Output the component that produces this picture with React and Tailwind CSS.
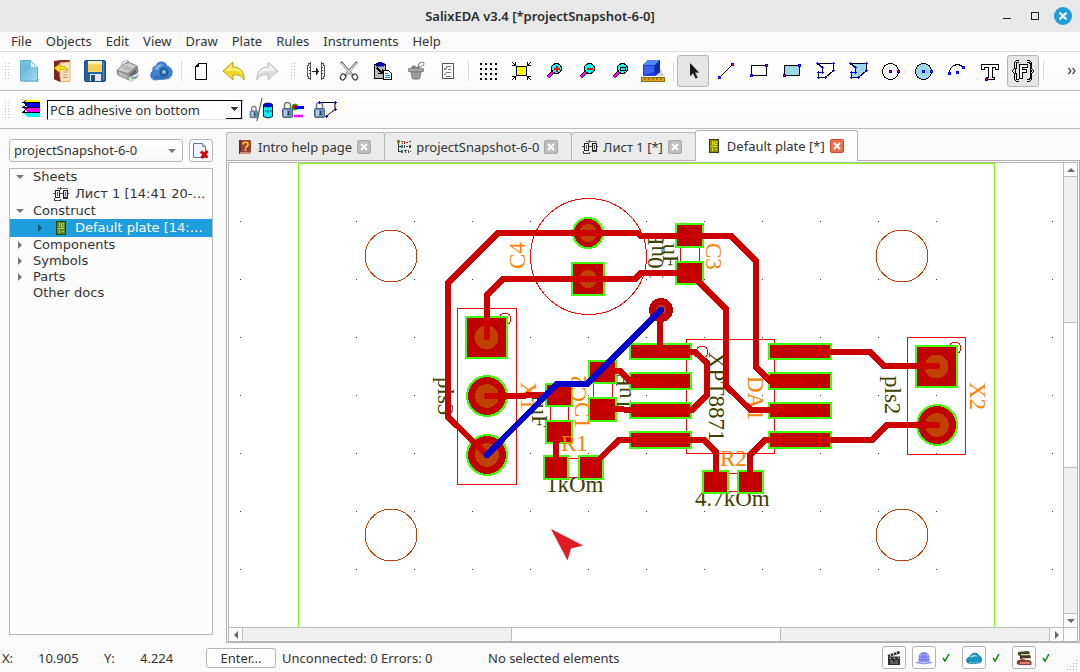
import { clsx } from "clsx";

const menus = ["File", "Objects", "Edit", "View", "Draw", "Plate", "Rules", "Instruments", "Help"];

/* ---------- toolbar icons, all on a 24x24 grid ---------- */

function Icon({ children, smooth = false, size = "h-6 w-6", box = "0 0 24 24" }) {
    return (
        <svg
            viewBox={box}
            className={clsx("shrink-0", size)}
            shapeRendering={smooth ? "auto" : "crispEdges"}
            fill="none"
            aria-hidden="true"
        >
            {children}
        </svg>
    );
}

const Node = ({ x, y }) => (
    <g>
        <rect x={x - 1} y={y - 1} width="3" height="3" fill="#0000ff" />
        <rect x={x} y={y} width="1" height="1" fill="#ff0000" />
    </g>
);

const Nodes = ({ points }) => points.map(([x, y]) => (
    <path key={`${x}-${y}`} d={`M${x - 1} ${y + 0.5}h3M${x + 0.5} ${y - 1}v3`} stroke="#0000ff" />
));

const NewIcon = () => (
    <Icon smooth>
        <defs>
            <linearGradient id="newDoc" x1="0" y1="0" x2="1" y2="1">
                <stop offset="0" stopColor="#8fcbe6" />
                <stop offset=".5" stopColor="#7cc3e2" />
                <stop offset="1" stopColor="#a9dcf0" />
            </linearGradient>
        </defs>
        <path d="M5 20h18l-2 3H6z" fill="#b8b8b8" opacity=".7" />
        <path d="M3.500 1.500h10l7 7v13.500h-17z" fill="url(#newDoc)" stroke="#5aa9cc" />
        <path d="M13.500 1.500v7h7z" fill="#d8f0fa" stroke="#6db4d3" strokeWidth=".7" />
        <path d="M4.500 2.500h8v7l-8 8z" fill="#4ba6cf" opacity=".35" />
    </Icon>
);

const OpenIcon = () => (
    <Icon smooth>
        <path d="M4 2l6-1h10v21l-9 1-7-3z" fill="#8c2f26" />
        <path d="M4 2l6 2v19l-6-3z" fill="#7a241e" />
        <path d="M10 4l10-1v19l-9 1-1-6z" fill="#f9e6c8" stroke="#eab27c" />
        <path d="M13 16h5M13 18.500h5M13 13h4" stroke="#e0904e" />
        <path d="M4 9l6-4v2.500c5-1 7 1 8 4.500-2-1.500-4-2-8-1.500V14z" fill="#ffe11a" stroke="#c79500" strokeWidth=".7" />
    </Icon>
);

const SaveIcon = () => (
    <Icon smooth>
        <rect x="1.500" y="1.500" width="21" height="21" rx="1.500" fill="#2563a5" stroke="#1b4d84" />
        <rect x="5" y="2" width="14" height="11" fill="#ffd75e" />
        <path d="M5 2h14v3H5z" fill="#fff0b0" />
        <path d="M5 8h14M5 10.500h14" stroke="#f1c348" />
        <rect x="7" y="15" width="11" height="7" fill="#e4e8ee" />
        <rect x="8" y="16" width="4" height="6" fill="#2a4d78" />
        <path d="M20 3h1v18h-1z" fill="#4a8dcd" />
    </Icon>
);

const PrintIcon = () => (
    <Icon smooth>
        <path d="M5 7l1-4 6-2 1 6z" fill="#dcebfa" stroke="#8ba6bd" strokeWidth=".7" />
        <path d="M1 11l6-5 5-3 9 4 1 6-9 8-11-5z" fill="#8b8b8b" stroke="#6b6b6b" strokeWidth=".8" />
        <path d="M1 11l8-6 4-1 7 3-8 7z" fill="#cdcdcd" />
        <path d="M9 7l7 3M7 8.500l7 3" stroke="#9c9c9c" />
        <path d="M2.500 12.500l9 3.500v4l-9-4z" fill="#b8b8b8" />
        <path d="M14 15l6-5v5l-6 5z" fill="#666" />
        <path d="M12 19l8-4 3 2-8 6z" fill="#eef6ff" stroke="#8a9db0" strokeWidth=".6" />
        <path d="M15 20l3-2" stroke="#5cc62e" strokeWidth="2" />
        <path d="M18 19.500l3-2" stroke="#7a4fd0" strokeWidth="1.500" />
    </Icon>
);

const CloudIcon = () => (
    <Icon smooth>
        <path d="M5 21a5 5 0 0 1-1-9C3 9 5 7 7 7c1-5 9-6 11 0 4 1 6 5 5 8-1 4-4 5-6 5z" fill="#3f82d0" stroke="#2a67b2" strokeWidth=".7" />
        <path d="M6 11c0-4 5-7 9-5-3 0-5 2-6 5z" fill="#7db2ea" />
        <path d="M4 18c5-3 12 2 17-3-2 5-12 6-17 3z" fill="#2d6cbb" />
        <circle cx="15" cy="13" r="3.500" stroke="#27568f" strokeWidth="1.600" />
        <path d="M15 8v10M10 13h10M11.500 9.500l7 7M18.500 9.500l-7 7" stroke="#27568f" strokeWidth="1.100" />
        <circle cx="15" cy="13" r="2" fill="#8fbcec" />
    </Icon>
);

const SheetIcon = () => (
    <Icon>
        <path d="M9.500 4.500h8v16h-11v-13z" fill="#fff" stroke="#000" />
        <path d="M9.500 4.500v3h-3" fill="#138080" stroke="#000" />
        <rect x="8" y="6" width="1" height="1" fill="#138080" />
    </Icon>
);

const UndoIcon = () => (
    <Icon smooth>
        <path d="M1 12l10-9v5c8 0 12 6 11 13-2-4-6-6-11-5v5z" fill="#f6da22" stroke="#a98c00" strokeWidth=".8" />
        <path d="M3 12l7-6.500V9c6 0 9 2 11 7-3-3-6-5-11-4z" fill="#fff27a" />
    </Icon>
);

const RedoIcon = () => (
    <Icon smooth>
        <path d="M23 12L13 3v5C5 8 1 14 2 21c2-4 6-6 11-5v5z" fill="#dcdcdc" stroke="#b5b5b5" strokeWidth=".8" />
        <path d="M21 12l-7-6.500V9c-6 0-9 2-11 7 3-3 6-5 11-4z" fill="#f4f4f4" />
    </Icon>
);

const MirrorIcon = () => (
    <Icon>
        <path d="M6.500 3v18M17.500 3v18" stroke="#444" />
        <path d="M6 4.500H4.500v2h-1v11h1v2H6M18 4.500h1.500v2h1v11h-1v2H18" stroke="#555" />
        <path d="M5 8.500h1M5 11.500h1M5 14.500h1M18 8.500h1M18 11.500h1M18 14.500h1" stroke="#555" />
        <path d="M8 12.500h7M13.500 10v5M12.500 9v7" stroke="#222" />
    </Icon>
);

const CutIcon = () => (
    <Icon smooth>
        <path d="M4 3l12 14M20 3L8 17" stroke="#4a4a4a" strokeWidth="2.500" />
        <path d="M4.500 4l11 12.500M19.500 4l-11 12.500" stroke="#e6e6e6" strokeWidth="1.200" />
        <ellipse cx="6" cy="18" rx="2.500" ry="3" stroke="#4d4d4d" strokeWidth="1.300" transform="rotate(30 6 18)" />
        <ellipse cx="18" cy="18" rx="2.500" ry="3" stroke="#4d4d4d" strokeWidth="1.300" transform="rotate(-30 18 18)" />
    </Icon>
);

const PasteIcon = () => (
    <Icon>
        <path d="M4.500 5.500h11v14h-11z" fill="#b9b9b9" stroke="#000" />
        <path d="M6 4h2V3h4v1h2v3H6z" fill="#0000c0" stroke="#00006a" strokeWidth=".5" />
        <path d="M7 9l5 5M12.500 10v4.500H8" stroke="#000" strokeWidth="1.500" />
        <path d="M13.500 11.500h5l3 3v6h-8z" fill="#fff" stroke="#000" />
        <path d="M15 14.500h3M15 16.500h5M15 18.500h5" stroke="#00a0c8" />
    </Icon>
);

const BasketIcon = () => (
    <Icon smooth>
        <path d="M7 12h12l-2 8q-4 1.500-8 0z" fill="#8a8a8a" />
        <path d="M5.500 9.500h15v3h-15z" fill="#a8a8a8" stroke="#7c7c7c" strokeWidth=".8" />
        <path d="M8 9c1-3 4-3 5-1l3-1 1 2" fill="#7c7c7c" />
        <path d="M10 14l1 5M13 14v5M16 14l-1 5" stroke="#b4b4b4" />
        <ellipse cx="18" cy="5.500" rx="3" ry="1.800" stroke="#888" transform="rotate(-25 18 5)" />
    </Icon>
);

const ListIcon = () => (
    <Icon>
        <path d="M6.500 4.500h11v15h-11z" fill="#fff" stroke="#555" />
        <path d="M10 7.500h5M10 13.500h5M10 17.500h5M12 10.500h3" stroke="#777" />
        <path d="M8 9l1 2 2-3M8 15l1 1 1-2" stroke="#888" />
    </Icon>
);

const GridIcon = () => (
    <Icon>
        {[4, 9, 14, 19].map((y) => [4, 9, 14, 19].map((x) => (
            <rect key={`${x}-${y}`} x={x} y={y} width="2" height="2" fill="#000" />
        )))}
    </Icon>
);

const FitIcon = () => (
    <Icon>
        <rect x="7.500" y="7.500" width="10" height="9" fill="#ffff00" stroke="#000" />
        <path d="M3 3l3 3M22 3l-3 3M3 21l3-3M22 21l-3-3" stroke="#000" />
        <path d="M3 6.500h3.500V3M22 6.500h-3.500V3M3 17.500h3.500V21M22 17.500h-3.500V21" stroke="#000" />
    </Icon>
);

function ZoomIcon({ kind }) {
    return (
        <Icon>
            <path d="M5.500 18.500l5-5" stroke="#000" strokeWidth="4" />
            <path d="M5.500 18.500l5-5" stroke="#ff00ff" strokeWidth="2" />
            <circle cx="14.500" cy="9.500" r="5" fill="#00ffff" stroke="#000" />
            {kind === "in" && <path d="M12 10h6M15 7v6" stroke="#ff0000" strokeWidth="2" />}
            {kind === "out" && <path d="M12 10h6" stroke="#ff0000" strokeWidth="2" />}
            {kind === "fit" && <rect x="12.500" y="8.500" width="5" height="3" fill="#40e0d0" stroke="#000" />}
        </Icon>
    );
}

const CubeIcon = () => (
    <Icon smooth>
        <path d="M15 17h8l-3-7z" fill="#b0b0b0" opacity=".6" />
        <path d="M2 6l5-5h12v12l-5 4H2z" fill="#1c3fd6" />
        <path d="M2 6l5-5h12l-5 5z" fill="#4f86f5" />
        <path d="M14 6l5-5v12l-5 4z" fill="#142a9e" />
        <path d="M3 7h10v6l-10 3z" fill="#3a63ef" />
        <rect x="0.500" y="18.500" width="23" height="4" fill="#dba520" stroke="#8f6a10" />
        <path d="M4 19v2M8 19v2M12 19v2M16 19v2M20 19v2" stroke="#6e500a" />
    </Icon>
);

const PointerIcon = () => (
    <Icon smooth>
        <path d="M10 5v13l3-3 2.500 5 2-1-2.300-5H19z" fill="#888" opacity=".5" />
        <path d="M9 4v13l3-3 2.500 5.500 2-1L14 13.500h4z" fill="#161616" />
    </Icon>
);

const LineIcon = () => (
    <Icon>
        <path d="M5 19L19 5" stroke="#000" />
        <Node x={5} y={18} />
        <Node x={18} y={5} />
    </Icon>
);

function RectIcon({ fill = "none" }) {
    return (
        <Icon>
            <rect x="4.500" y="6.500" width="15" height="10" fill={fill} stroke="#000" />
            <Node x={4} y={16} />
            <Node x={19} y={6} />
        </Icon>
    );
}

const polyNodes = [[4, 4], [20, 4], [20, 11], [12, 18], [5, 18], [5, 13], [9, 13], [9, 8]];

function PolyIcon({ fill = "none" }) {
    return (
        <Icon>
            <path d="M4.500 4.500h16v7l-8 7h-7v-5h4v-5z" fill={fill} stroke="#000" />
            <Nodes points={polyNodes} />
        </Icon>
    );
}

function CircleIcon({ fill = "none" }) {
    return (
        <Icon>
            <circle cx="11.500" cy="12.500" r="8" fill={fill} stroke="#000" />
            <Node x={11} y={12} />
            <Node x={19} y={12} />
        </Icon>
    );
}

const ArcIcon = () => (
    <Icon>
        <path d="M4.500 14.500a8 8 0 0 1 14-6" stroke="#000" />
        <Node x={4} y={14} />
        <Node x={12} y={13} />
        <Node x={18} y={8} />
    </Icon>
);

const TextIcon = () => (
    <Icon>
        <path d="M3.500 5.500h17v5h-3v-2h-3v10h2v2h-8v-2h2v-10h-4v2h-3z" fill="#fff" stroke="#000" />
        <Node x={8} y={20} />
    </Icon>
);

const FragmentIcon = () => (
    <Icon>
        <path d="M8 1.500H5.500l-2 2v6l-2 2v1l2 2v6l2 2H8M16 1.500h2.500l2 2v6l2 2v1l-2 2v6l-2 2H16" stroke="#000" />
        <path d="M8 3.500H6l-1 1v5l-1 2v1l1 2v5l1 1h2M16 3.500h2l1 1v5l1 2v1l-1 2v5l-1 1h-2" stroke="#000" />
        <path d="M8.500 5.500h8v3h-5v2h4v3h-4v6h-3z" fill="#fff" stroke="#000" />
    </Icon>
);

const Padlock = () => (
    <g>
        <path d="M3.500 11V7.500c0-4 6-4 6 0V11" stroke="#7a7a7a" strokeWidth="1.600" />
        <rect x="1.500" y="10.500" width="10" height="9" rx="1" fill="#6f8db3" stroke="#4b6588" />
        <path d="M3 12h3v6H3z" fill="#b4cbe6" />
        <path d="M7.500 13v4" stroke="#1d3350" strokeWidth="1.400" />
    </g>
);

const LayersIcon = () => (
    <Icon>
        <path d="M5 1.500h17v2H7z" fill="#ffff00" />
        <path d="M5 5h17v4H9z" fill="#0000ff" />
        <path d="M5 10h17v4H9z" fill="#ff00ff" />
        <path d="M5 15h17v4H9z" fill="#00ffff" />
        <path d="M8 2.500L5 4.500h17M9 6L5 9.500h17M9 10l-4 4.500h17" stroke="#000" />
    </Icon>
);

const LockLayerIcon = () => (
    <Icon smooth>
        <g transform="translate(0 5) scale(.75)"><Padlock /></g>
        <path d="M13 0L8 23" stroke="#5b6b3c" strokeWidth="1.200" />
        <path d="M14.500 7v11.500q4.500 3 9 0V7z" fill="#00f0ff" stroke="#000" strokeWidth=".9" />
        <ellipse cx="19" cy="7" rx="4.500" ry="2" fill="#0000ff" stroke="#000" strokeWidth=".7" />
        <path d="M16 13h1.500M19 12v3M21 13h1.500" stroke="#007080" strokeWidth="1.500" />
    </Icon>
);

const LockTraceIcon = () => (
    <Icon smooth>
        <Padlock />
        <circle cx="14" cy="9" r="3" fill="#ff0000" stroke="#00c000" />
        <path d="M14 9.500h9" stroke="#0000ff" strokeWidth="3" />
        <path d="M13 18h9" stroke="#ff00ff" strokeWidth="2.500" />
    </Icon>
);

const LockPolyIcon = () => (
    <Icon smooth>
        <path d="M6 4.500h16v7l-9 7" stroke="#000" />
        <Padlock />
        <Nodes points={[[6, 4], [22, 4], [22, 11], [13, 18]]} />
    </Icon>
);

/* ---------- small icons ---------- */

const SchematicIcon = () => (
    <Icon size="h-4 w-4" box="0 0 16 16">
        <path d="M0 7.500h16M7.500 1v3M1.500 12v2.500h6v-2M10 12.500h4v-2" stroke="#444" />
        <rect x="2.500" y="4.500" width="4" height="7" fill="#eee" stroke="#222" />
        <rect x="10.500" y="4.500" width="4" height="7" fill="#ddd" stroke="#222" />
        <path d="M4.500 6v4M12.500 6v4M4 2.500h11" stroke="#666" />
    </Icon>
);

function PlateIcon({ fill, trace }) {
    return (
        <Icon size="h-4 w-4" box="0 0 16 16">
            <rect x="3.500" y="1.500" width="9" height="13" fill={fill} stroke="#333c12" />
            <path d="M6.500 3v4M8.500 3v3h2M5 8.500h6M6.500 10v3M8.500 11.500h2.500M10.500 3v2" stroke={trace} />
        </Icon>
    );
}

const HelpBookIcon = () => (
    <Icon size="h-4 w-4" box="0 0 16 16" smooth>
        <rect x="2" y="1" width="12" height="14" rx="1" fill="#9c4038" />
        <path d="M2 1h2v14H2z" fill="#6f2520" />
        <path d="M3 13h11v2H3z" fill="#c98f80" />
        <path d="M6 5.500c0-3 5-3 5 0 0 2-2.500 2-2.500 4" stroke="#ffdf20" strokeWidth="1.600" />
        <path d="M8.500 10.500v1.500" stroke="#ffdf20" strokeWidth="1.700" />
    </Icon>
);

const ProjectTreeIcon = () => (
    <Icon size="h-4 w-4" box="0 0 16 16">
        <path d="M3.500 3v9.500h4M3.500 7.500h4" stroke="#333" />
        <rect x="2" y="1" width="3" height="3" fill="#8a8a00" />
        <path d="M6 2.500h2M9 1.500v3M11 3.500h2M14 2.500h2M7 4.500h1" stroke="#b02020" />
        <rect x="6" y="6" width="2" height="3" fill="#0e8080" />
        <rect x="6" y="11" width="2" height="3" fill="#0e8080" />
        <path d="M9.500 6v3M11 7.500h2M14 6l2 3M14 9l2-3M9 11.500h3M13.500 11v3M15 12.500h1M10.500 12v2" stroke="#444" />
    </Icon>
);

const DeleteDocIcon = () => (
    <Icon size="h-4 w-4" box="0 0 16 16" smooth>
        <path d="M.500.500h9l3 3v11H.500z" fill="#eef3fb" stroke="#5c7795" />
        <path d="M9.500.500v3h3" fill="#c7d5e6" stroke="#5c7795" strokeWidth=".7" />
        <path d="M8 8.500l6.500 6M14.500 8l-6 7" stroke="#d40000" strokeWidth="3" />
    </Icon>
);

const ClapperIcon = () => (
    <Icon size="h-4 w-4" box="0 0 16 16" smooth>
        <path d="M2 6.500h12V15H2z" fill="#2d2d30" />
        <path d="M1.500 5L13 1l1 2.500L2.500 7z" fill="#222" />
        <path d="M4 4l1 2M7 3l1 2M10 2l1 2M4 7.500l1 1.500M8 7.500L9 9M12 7.500L13 9" stroke="#eee" />
        <path d="M4 11h3M9 11h3M4 13h8" stroke="#8d8d90" />
    </Icon>
);

const HatIcon = () => (
    <Icon size="h-4 w-4" box="0 0 16 16" smooth>
        <path d="M3 11V7c0-6 10-6 10 0v4z" fill="#a3a6f4" stroke="#7a7eea" strokeWidth=".8" />
        <path d="M3 7h10M3 9.500h10M6 3v8M8 2v9M10 3v8" stroke="#6468e0" strokeWidth=".7" />
        <path d="M0 12.500q8-3 16 0-8 3-16 0z" fill="#c3c5ff" stroke="#7a7eea" strokeWidth=".8" />
    </Icon>
);

const BlueCloudIcon = () => (
    <Icon size="h-4 w-4" box="0 0 16 16" smooth>
        <path d="M2 13c-3-2-1-6 2-6 1-5 8-5 9-1 4 1 4 6 0 7q-6 1.500-11 0z" fill="#1692bd" stroke="#0b6485" strokeWidth=".6" />
        <path d="M4 8c2-4 6-4 8-1-3-1-5 0-8 1z" fill="#8be3fb" />
        <path d="M3 12q5 2 10 0" stroke="#43c6e8" />
    </Icon>
);

const BooksIcon = () => (
    <Icon size="h-4 w-4" box="0 0 16 16" smooth>
        <path d="M2 2l9-1 3 1-1 3-9 1-2-1z" fill="#3f4a2a" />
        <path d="M4 6l10-1 1 3-9 2-2-1z" fill="#4a3320" />
        <path d="M5 4.500h8M6 8.500h8" stroke="#e5c88a" />
        <path d="M2 10.500h11l2 1v3H3l-2-1z" fill="#a83232" stroke="#5a1515" strokeWidth=".7" />
        <path d="M4 13h10" stroke="#f0d9a8" />
    </Icon>
);

/* ---------- toolbars ---------- */

function ToolButton({ label, pressed = false, children }) {
    return (
        <button
            type="button"
            aria-label={label}
            aria-pressed={pressed}
            className={clsx(
                "flex h-8 w-8 shrink-0 items-center justify-center rounded-[3px] border",
                pressed ? "border-[#b4b4b4] bg-[#e6e6e6]" : "border-transparent hover:bg-gray-100"
            )}
        >
            {children}
        </button>
    );
}

const Separator = () => (
    <span className="flex w-[6px] shrink-0 justify-center">
        <span className="h-5 w-px bg-[#dcdcdc]" />
    </span>
);

function Handle() {
    return (
        <svg viewBox="0 0 5 16" className="h-4 w-[5px] shrink-0" shapeRendering="crispEdges" aria-hidden="true">
            {[0, 3, 6, 9, 12, 15].map((y) => (
                <g key={y} fill="#bdbdbd">
                    <rect x="0" y={y} width="1" height="1" />
                    <rect x="3" y={y} width="1" height="1" />
                </g>
            ))}
        </svg>
    );
}

function MainToolbar() {
    return (
        <div className="flex h-[39px] items-center gap-px overflow-hidden border-b border-[#bcbcbc] bg-gradient-to-b from-white to-[#fafafa] pl-[5px] pr-1">
            <Handle />
            <span className="w-px" />
            <ToolButton label="New project"><NewIcon /></ToolButton>
            <ToolButton label="Open project"><OpenIcon /></ToolButton>
            <ToolButton label="Save"><SaveIcon /></ToolButton>
            <ToolButton label="Print"><PrintIcon /></ToolButton>
            <ToolButton label="Cloud"><CloudIcon /></ToolButton>
            <Separator />
            <ToolButton label="New sheet"><SheetIcon /></ToolButton>
            <ToolButton label="Undo"><UndoIcon /></ToolButton>
            <ToolButton label="Redo"><RedoIcon /></ToolButton>
            <span className="flex w-[15px] justify-end pr-[3px]"><Handle /></span>
            <ToolButton label="Mirror"><MirrorIcon /></ToolButton>
            <ToolButton label="Cut"><CutIcon /></ToolButton>
            <ToolButton label="Paste"><PasteIcon /></ToolButton>
            <ToolButton label="Delete"><BasketIcon /></ToolButton>
            <ToolButton label="Properties"><ListIcon /></ToolButton>
            <Separator />
            <ToolButton label="Grid"><GridIcon /></ToolButton>
            <ToolButton label="Fit page"><FitIcon /></ToolButton>
            <ToolButton label="Zoom in"><ZoomIcon kind="in" /></ToolButton>
            <ToolButton label="Zoom out"><ZoomIcon kind="out" /></ToolButton>
            <ToolButton label="Zoom window"><ZoomIcon kind="fit" /></ToolButton>
            <ToolButton label="3D view"><CubeIcon /></ToolButton>
            <Separator />
            <ToolButton label="Select" pressed><PointerIcon /></ToolButton>
            <ToolButton label="Line"><LineIcon /></ToolButton>
            <ToolButton label="Rectangle"><RectIcon /></ToolButton>
            <ToolButton label="Filled rectangle"><RectIcon fill="#9ad9ea" /></ToolButton>
            <ToolButton label="Region"><PolyIcon /></ToolButton>
            <ToolButton label="Filled region"><PolyIcon fill="#9ad9ea" /></ToolButton>
            <ToolButton label="Circle"><CircleIcon /></ToolButton>
            <ToolButton label="Filled circle"><CircleIcon fill="#9ad9ea" /></ToolButton>
            <ToolButton label="Arc"><ArcIcon /></ToolButton>
            <ToolButton label="Text"><TextIcon /></ToolButton>
            <ToolButton label="Fragment" pressed><FragmentIcon /></ToolButton>
            <Separator />
            <button type="button" aria-label="More tools" className="ml-auto">
                <Icon size="h-2 w-2" box="0 0 8 8" smooth>
                    <path d="M.500 1L3 4 .500 7M4.500 1L7 4 4.500 7" stroke="#444" strokeWidth="1.200" />
                </Icon>
            </button>
        </div>
    );
}

function LayerToolbar() {
    return (
        <div className="flex h-[38px] items-center border-b border-[#bcbcbc] bg-gradient-to-b from-white to-[#fafafa] pl-[5px]">
            <Handle />
            <span className="ml-2 mr-[5px]"><LayersIcon /></span>
            <div className="relative mr-[2px] w-[196px]">
                <select
                    aria-label="Layer"
                    className="block h-5 w-full appearance-none border border-black border-b-[#e4e4e4] border-r-[#e4e4e4] bg-white pl-[2px] text-[13px] leading-4 text-[#333]"
                >
                    <option>PCB adhesive on bottom</option>
                </select>
                <span className="pointer-events-none absolute right-px top-px flex h-[18px] w-4 items-center justify-center border-b border-r border-black bg-[#fcfcfc]">
                    <Icon size="h-2 w-2" box="0 0 8 8">
                        <path d="M0 2h8L4 6z" fill="#333" />
                    </Icon>
                </span>
            </div>
            <ToolButton label="Lock layer"><LockLayerIcon /></ToolButton>
            <ToolButton label="Lock traces"><LockTraceIcon /></ToolButton>
            <ToolButton label="Lock regions"><LockPolyIcon /></ToolButton>
        </div>
    );
}

/* ---------- project panel ---------- */

const treeRows = [
    { label: "Sheets", arrow: "down" },
    { label: "Лист 1 [14:41 20-…", icon: <SchematicIcon /> },
    { label: "Construct", arrow: "down" },
    { label: "Default plate [14:…", icon: <PlateIcon fill="#5f8a1e" trace="#b6d65a" />, arrow: "right", selected: true },
    { label: "Components", arrow: "right" },
    { label: "Symbols", arrow: "right" },
    { label: "Parts", arrow: "right" },
    { label: "Other docs" },
];

function TreeArrow({ dir, fill = "#777" }) {
    return (
        <Icon size="h-2 w-2" box="0 0 8 8" smooth>
            {dir === "down" && <path d="M0 2h8L4 6z" fill={fill} />}
            {dir === "right" && <path d="M2 0v8l4-4z" fill={fill} />}
        </Icon>
    );
}

function ProjectPanel() {
    return (
        <aside className="flex w-[213px] shrink-0 flex-col pb-2 pl-[9px] pt-[10px]">
            <div className="flex gap-[6px]">
                <div className="relative min-w-0 flex-1">
                    <select
                        aria-label="Project"
                        className="block h-[23px] w-full appearance-none rounded-[3px] border border-[#b6b6b6] bg-gradient-to-b from-white to-[#f8f8f8] pb-[2px] pl-1 text-[13px] leading-4 text-[#333]"
                    >
                        <option>projectSnapshot-6-0</option>
                    </select>
                    <span className="pointer-events-none absolute inset-y-0 right-[7px] flex items-center">
                        <TreeArrow dir="down" />
                    </span>
                </div>
                <button
                    type="button"
                    aria-label="Close project"
                    className="flex h-[23px] w-6 items-center justify-center rounded-[3px] border border-[#b6b6b6] bg-white"
                >
                    <DeleteDocIcon />
                </button>
            </div>
            <ul
                role="tree"
                className="mt-[6px] flex-1 border border-[#b6b6b6] bg-[#fcfcfc] font-['DejaVu_Sans',sans-serif] text-[13px] leading-4 text-[#333]"
            >
                {treeRows.map((row) => (
                    <li
                        key={row.label}
                        role="treeitem"
                        aria-selected={Boolean(row.selected)}
                        className={clsx(
                            "flex items-center whitespace-nowrap",
                            row.icon ? "h-[18px] pl-[26px]" : "h-4 pl-[6px]",
                            row.selected && "bg-[#1f9ede] text-white"
                        )}
                    >
                        <TreeArrow dir={row.arrow} fill={row.selected ? "#14557a" : "#777"} />
                        {row.icon ? <span className="ml-[9px] mr-[6px]">{row.icon}</span> : <span className="w-[9px]" />}
                        {row.label}
                    </li>
                ))}
            </ul>
        </aside>
    );
}

/* ---------- document tabs ---------- */

const tabs = [
    { label: "Intro help page", icon: <HelpBookIcon /> },
    { label: "projectSnapshot-6-0", icon: <ProjectTreeIcon /> },
    { label: "Лист 1 [*]", icon: <SchematicIcon /> },
    { label: "Default plate [*]", icon: <PlateIcon fill="#8f8f00" trace="#e6e600" />, active: true },
];

function DocumentTabs() {
    return (
        <div className="flex items-end" role="tablist">
            {tabs.map((tab) => (
                <div
                    key={tab.label}
                    role="tab"
                    aria-selected={Boolean(tab.active)}
                    className={clsx(
                        "flex items-center gap-[5px] whitespace-nowrap rounded-t-[3px] border border-b-0 border-[#b6b6b6] pl-[10px] pr-[13px] text-[13px] text-[#333]",
                        tab.active ? "z-10 -mb-px h-[31px] bg-[#fdfdfd]" : "-mr-px h-7 bg-[#ebebeb]"
                    )}
                >
                    {tab.icon}
                    {tab.label}
                    <button
                        type="button"
                        aria-label={`Close ${tab.label}`}
                        className={clsx(
                            "flex h-[14px] w-[14px] items-center justify-center rounded-[2px] border",
                            tab.active ? "border-[#d5472c] bg-[#e5714f]" : "border-[#a9a9a9] bg-[#bdbdbd]"
                        )}
                    >
                        <Icon size="h-2 w-2" box="0 0 8 8" smooth>
                            <path d="M1 1l6 6M7 1L1 7" stroke="#fff" strokeWidth="2" />
                        </Icon>
                    </button>
                </div>
            ))}
        </div>
    );
}

/* ---------- board drawing ---------- */

const gridX = Array.from({ length: 15 }, (_, i) => 240 + i * 58);
const gridY = Array.from({ length: 7 }, (_, i) => 221 + i * 58);

const holes = [[391, 256], [902, 256], [391, 535], [902, 535]];

// x, y, width, height of the copper including its mask ring
const smdPads = [
    [675, 223, 29, 25], [675, 261, 29, 24],
    [588, 360, 29, 24], [588, 397, 29, 25],
    [545, 383, 28, 24], [545, 420, 28, 24],
    [543, 455, 26, 25], [578, 455, 26, 25],
    [702, 470, 27, 24], [737, 470, 27, 24],
    [629, 343, 63, 17], [629, 372, 63, 18], [629, 402, 63, 17], [629, 431, 63, 18],
    [768, 343, 64, 17], [768, 372, 64, 18], [768, 402, 64, 17], [768, 431, 64, 18],
];

const squarePads = [[571, 262, 34, 9], [465, 316, 43, 12], [915, 345, 43, 12]];
const roundPads = [[588, 233, 16, 9], [487, 396, 21, 12], [487, 455, 21, 12], [937, 425, 21, 12]];

const bodies = [
    [457.5, 308.5, 59, 176], [907.5, 337.5, 58, 117], [686.5, 339.5, 88, 114],
    [680.5, 230.5, 19, 48], [593.5, 366.5, 19, 48], [550.5, 388.5, 18, 50],
    [550.5, 458.5, 46, 19], [709.5, 473.5, 46, 18],
];

const traces = [
    "487,455 448,417 448,283 498,233 637,233 641,236 731,236 756,261 756,367 770,381 802,381",
    "487,337 487,295 503,279 635,279 641,273 690,273 726,309 726,386 751,410 802,410",
    "487,396 524,396 528,395 560,395",
    "602,371 620,371 630,381 661,381",
    "601,409 622,409 626,410 692,410 707,395 707,363 695,352 660,352",
    "559,432 556,445 556,468",
    "590,468 619,440 704,440 716,452 716,482",
    "660,310 660,352",
    "798,352 870,352 884,366 937,366",
    "750,482 750,455 765,440 872,440 887,425 937,425",
];

const values = [
    { text: "pls3", x: 438, y: 377, turn: 90 },
    { text: "pls2", x: 885, y: 376, turn: 90 },
    { text: "10uF", x: 663, y: 280, turn: -90 },
    { text: "1uF", x: 663, y: 232, turn: 90 },
    { text: "1uF", x: 532, y: 392, turn: 90 },
    { text: "1uF", x: 631, y: 410, turn: -90 },
    { text: "XPT8871", x: 709, y: 352, turn: 90 },
    { text: "1kOm", x: 546, y: 492, turn: 0 },
    { text: "4.7kOm", x: 695, y: 506, turn: 0 },
];

const names = [
    { text: "C4", x: 525, y: 269, turn: -90 },
    { text: "C3", x: 706, y: 243, turn: 90 },
    { text: "X1", x: 521, y: 382, turn: 90 },
    { text: "X2", x: 970, y: 382, turn: 90 },
    { text: "C2", x: 586, y: 402, turn: -90 },
    { text: "C1", x: 575, y: 402, turn: 90 },
    { text: "DA1", x: 748, y: 376, turn: 90 },
    { text: "R1", x: 561, y: 451, turn: 0 },
    { text: "R2", x: 720, y: 466, turn: 0 },
];

function Labels({ items, fill }) {
    return (
        <g fill={fill} fontSize="23" fontFamily="'Liberation Serif', serif">
            {items.map(({ text, x, y, turn }) => (
                <text key={`${text}-${x}`} transform={`translate(${x} ${y}) rotate(${turn})`}>
                    {text}
                </text>
            ))}
        </g>
    );
}

function Board() {
    return (
        <svg className="block h-full w-full bg-white" shapeRendering="crispEdges" role="img" aria-label="Board layout">
            <g transform="translate(-229 -163)">
                {gridY.map((y) => gridX.map((x) => (
                    <rect key={`${x}-${y}`} x={x} y={y} width="1" height="1" fill="#404040" />
                )))}

                <path d="M298.500 1400V163.500H994.500V1400" fill="none" stroke="#80ff00" />
                {holes.map(([x, y]) => (
                    <circle key={`${x}-${y}`} cx={x} cy={y} r="26" fill="none" stroke="#c04000" />
                ))}

                <g fill="none" stroke="#ff0000">
                    <circle cx="588.500" cy="256.500" r="58" />
                    <circle cx="505" cy="319" r="6" />
                    <circle cx="955" cy="348" r="6" />
                    <circle cx="702" cy="352" r="6" />
                    {bodies.map(([x, y, w, h]) => (
                        <rect key={`${x}-${y}`} x={x} y={y} width={w} height={h} />
                    ))}
                </g>

                <Labels items={values} fill="#404000" />

                {smdPads.map(([x, y, w, h]) => (
                    <g key={`${x}-${y}`}>
                        <rect x={x} y={y} width={w} height={h} fill="#40ff00" />
                        <rect x={x + 2} y={y + 2} width={w - 4} height={h - 4} fill="#c00000" />
                    </g>
                ))}
                {squarePads.map(([x, y, size, hole]) => (
                    <g key={`${x}-${y}`}>
                        <rect x={x} y={y} width={size} height={size} fill="#40ff00" />
                        <rect x={x + 2} y={y + 2} width={size - 4} height={size - 4} fill="#c00000" />
                        <circle cx={x + size / 2} cy={y + size / 2} r={hole} fill="#c04000" />
                    </g>
                ))}
                {roundPads.map(([x, y, r, hole]) => (
                    <g key={`${x}-${y}`}>
                        <circle cx={x} cy={y} r={r} fill="#40ff00" />
                        <circle cx={x} cy={y} r={r - 2} fill="#c00000" />
                        <circle cx={x} cy={y} r={hole} fill="#c04000" />
                    </g>
                ))}
                <circle cx="661" cy="310" r="12" fill="#c00000" />
                <circle cx="661" cy="310" r="5" fill="#c04000" />

                <Labels items={names} fill="#ff8000" />

                <g fill="none" stroke="#cc0000" strokeWidth="6" strokeLinecap="round" strokeLinejoin="round">
                    {traces.map((points) => (
                        <polyline key={points} points={points} />
                    ))}
                    <polyline points="487,455 557,384 587,384 661,310" stroke="#0000cc" />
                </g>

                <path d="M551 529l32 16.500-12 3-3.500 12z" fill="#e01b24" shapeRendering="auto" />
            </g>
        </svg>
    );
}

function ScrollArrow({ d, label }) {
    return (
        <button type="button" aria-label={label} className="flex h-[13px] w-[13px] shrink-0 items-center justify-center bg-[#fcfcfc]">
            <Icon size="h-2 w-2" box="0 0 8 8" smooth>
                <path d={d} fill="#666" />
            </Icon>
        </button>
    );
}

function BoardView() {
    return (
        <div className="min-h-0 flex-1 border border-[#b0b0b0] bg-[#fcfcfc] p-px pb-0">
            <div className="grid h-full grid-cols-[minmax(0,1fr)_14px] grid-rows-[minmax(0,1fr)_14px] border border-[#b6b6b6]">
                <Board />
                <div className="flex min-h-0 flex-col border-l border-[#bcbcbc] bg-[#f0f0f0]">
                    <ScrollArrow label="Scroll up" d="M0 6h8L4 2z" />
                    <div className="flex-1 border-t border-[#bcbcbc]" />
                    <div className="flex-1 border-y border-[#bcbcbc] bg-[#fdfdfd]" />
                    <div className="flex-1 border-b border-[#bcbcbc]" />
                    <ScrollArrow label="Scroll down" d="M0 2h8L4 6z" />
                </div>
                <div className="flex min-w-0 border-t border-[#bcbcbc] bg-[#f0f0f0]">
                    <ScrollArrow label="Scroll left" d="M6 0v8L2 4z" />
                    <div className="flex-1 border-l border-[#bcbcbc]" />
                    <div className="flex-1 border-x border-[#bcbcbc] bg-[#fdfdfd]" />
                    <div className="flex-1 border-r border-[#bcbcbc]" />
                    <ScrollArrow label="Scroll right" d="M2 0v8l4-4z" />
                </div>
                <div className="border-l border-t border-[#bcbcbc]" />
            </div>
        </div>
    );
}

/* ---------- status bar ---------- */

const services = [
    { label: "Record", icon: <ClapperIcon />, ok: false },
    { label: "Training", icon: <HatIcon />, ok: true },
    { label: "Cloud", icon: <BlueCloudIcon />, ok: true },
    { label: "Library", icon: <BooksIcon />, ok: true },
];

function StatusBar() {
    return (
        <footer className="flex h-[29px] items-center whitespace-nowrap bg-[#fafafa] pl-[2px]">
            <span className="w-9">X:</span>
            <span className="w-[66px]">10.905</span>
            <span className="w-9">Y:</span>
            <span className="w-[66px]">4.224</span>
            <button type="button" className="h-5 w-[70px] rounded-[3px] border border-[#b4b4b4] bg-white">
                Enter...
            </button>
            <span className="ml-[6px] w-[206px]">Unconnected: 0 Errors: 0</span>
            <span>No selected elements</span>
            <div className="ml-auto flex items-center gap-[6px]">
                {services.map((service) => (
                    <div key={service.label} className="flex items-center">
                        <button
                            type="button"
                            aria-label={service.label}
                            className="flex h-[23px] w-6 items-center justify-center rounded-[3px] border border-[#b4b4b4] bg-white"
                        >
                            {service.icon}
                        </button>
                        {service.ok && (
                            <span className="flex w-5 justify-center">
                                <Icon size="h-2 w-3" box="0 0 12 8" smooth>
                                    <path d="M3 4l2 3L9 0" stroke="#0a8a0a" strokeWidth="1.500" />
                                </Icon>
                            </span>
                        )}
                    </div>
                ))}
            </div>
            <svg viewBox="0 0 12 12" className="ml-[11px] mr-px mt-auto h-3 w-3" aria-hidden="true">
                <path d="M9 0h1v1H9zM6 3h1v1H6zM9 3h1v1H9zM3 6h1v1H3zM6 6h1v1H6zM9 6h1v1H9zM0 9h1v1H0zM3 9h1v1H3zM6 9h1v1H6zM9 9h1v1H9z" fill="#aaa" />
            </svg>
        </footer>
    );
}

function TitleBar() {
    return (
        <header className="grid h-8 grid-cols-[1fr_auto_1fr] items-center bg-[#e8e8e8]">
            <span />
            <h1 className="text-[13px] font-semibold text-[#2c2c2c]">SalixEDA v3.4 [*projectSnapshot-6-0]</h1>
            <div className="flex items-center justify-end gap-[18px] pr-2">
                <button type="button" aria-label="Minimize">
                    <Icon size="h-[10px] w-[10px]" box="0 0 10 10">
                        <path d="M1 7.500h8" stroke="#222" />
                    </Icon>
                </button>
                <button type="button" aria-label="Maximize">
                    <Icon size="h-[10px] w-[10px]" box="0 0 10 10">
                        <rect x="1.500" y="1.500" width="7" height="7" stroke="#222" />
                    </Icon>
                </button>
                <button type="button" aria-label="Close" className="-ml-1 flex h-[18px] w-[18px] items-center justify-center rounded-full bg-[#1f9ede]">
                    <Icon size="h-2 w-2" box="0 0 8 8" smooth>
                        <path d="M.500.500l7 7M7.500.500l-7 7" stroke="#fff" strokeWidth="2" />
                    </Icon>
                </button>
            </div>
        </header>
    );
}

export default function App() {
    return (
        <div className="flex h-screen flex-col bg-[#fafafa] font-['Noto_Sans',sans-serif] text-[13px] leading-4 text-[#333]">
            <TitleBar />
            <nav className="flex h-5 items-center gap-[14px] border-b border-[#dedede] pb-[2px] pl-[11px]">
                {menus.map((menu) => (
                    <button key={menu} type="button">{menu}</button>
                ))}
            </nav>
            <MainToolbar />
            <LayerToolbar />
            <main className="flex min-h-0 flex-1">
                <ProjectPanel />
                <section className="ml-[13px] flex min-w-0 flex-1 flex-col pt-px">
                    <DocumentTabs />
                    <BoardView />
                </section>
            </main>
            <StatusBar />
        </div>
    );
}
